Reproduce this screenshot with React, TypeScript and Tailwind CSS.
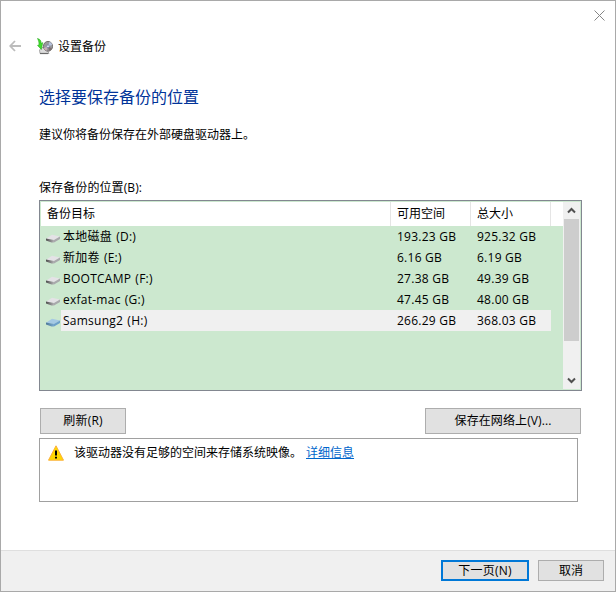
import React from "react";

type Drive = {
  name: string;
  free: string;
  total: string;
  active?: boolean;
};

const drives: Drive[] = [
  { name: "本地磁盘 (D:)", free: "193.23 GB", total: "925.32 GB" },
  { name: "新加卷 (E:)", free: "6.16 GB", total: "6.19 GB" },
  { name: "BOOTCAMP (F:)", free: "27.38 GB", total: "49.39 GB" },
  { name: "exfat-mac (G:)", free: "47.45 GB", total: "48.00 GB" },
  { name: "Samsung2 (H:)", free: "266.29 GB", total: "368.03 GB", active: true },
];

const BackupIcon = () => (
  <svg width="16" height="17" viewBox="0 0 16 17" className="shrink-0">
    <path d="M2.5 12 L5 9.5 H9 L12 15.5 H3 Z" fill="#dcdcdc" stroke="#8c8c8c" strokeWidth="0.7" />
    <path d="M3 15.5 H11" stroke="#6a6a6a" strokeWidth="1.2" />
    <ellipse cx="11" cy="8.3" rx="4.6" ry="4.9" fill="#98989c" stroke="#6c6866" strokeWidth="0.9" />
    <path d="M11 8.3 L12.5 3.8 A4.6 4.9 0 0 1 15.3 7 Z" fill="#b7c3dd" />
    <path d="M11 8.3 L6.8 10 A4.6 4.9 0 0 0 9.5 12.8 Z" fill="#c8acb8" />
    <path d="M11 8.3 L15 10.5 A4.6 4.9 0 0 1 12 13 Z" fill="#7d6f70" />
    <circle cx="11" cy="8.3" r="1.4" fill="#e4e4ee" stroke="#5f6f9c" strokeWidth="0.6" />
    <path d="M0.3 0.5 C2.8 0.8 4.2 2.5 4.2 5.3 L5.8 4.6 L4.4 11.5 L0.5 7.4 L2 6.8 C2 4 1.5 2 0.3 0.5 Z" fill="#41d92b" stroke="#22a51c" strokeWidth="0.5" />
  </svg>
);

const DriveIcon = ({ active }: { active?: boolean }) => {
  const id = active ? "face-active" : "face";
  return (
    <svg width="14" height="9" viewBox="0 0 14 9" className="mt-[3px] shrink-0">
      <defs>
        <linearGradient id={id}>
          <stop offset="0" stopColor={active ? "#4d7898" : "#4c4c4c"} />
          <stop offset="1" stopColor={active ? "#7aa9cf" : "#b4b4b6"} />
        </linearGradient>
      </defs>
      <path d="M0 4.8 L6 0.8 L14 2.4 L8 6.2 Z" fill={active ? "#a5c9e4" : "#e4e2e6"} />
      <path d="M0 4.6 L8 6 V8.6 L5.5 8.4 L0 6.4 Z" fill={`url(#${id})`} />
      <path d="M8 6 L14 2.4 V5 L8 8.6 Z" fill={active ? "#6c9fca" : "#a9a9ac"} />
    </svg>
  );
};

const WarningIcon = () => (
  <svg width="16" height="16" viewBox="0 0 16 16" className="shrink-0">
    <path d="M8 0.8 L15.5 15.2 H0.5 Z" fill="#ffd800" stroke="#fbb03b" strokeWidth="1" strokeLinejoin="round" />
    <path d="M7 5.5 H9 V10.5 H7 Z M7 11.8 H9 V13.6 H7 Z" fill="#000" />
  </svg>
);

const App = () => {
  return (
    <div className="flex h-[592px] w-[616px] flex-col border border-[#a9a9a9] bg-white font-['Open_Sans','Noto_Sans_CJK_SC',sans-serif] text-[12px] leading-[16px] text-black">
      {/* TITLE */}
      <div className="flex h-[33px] justify-end pt-[9px] pr-[10px]">
        <svg width="11" height="11" viewBox="0 0 11 11">
          <path d="M0.5 0.5 L10.5 10.5 M10.5 0.5 L0.5 10.5" stroke="#858585" strokeWidth="1" />
        </svg>
      </div>
      <div className="flex h-[24px] items-center pl-[8px]">
        <svg width="12" height="12" viewBox="0 0 12 12">
          <path d="M6 1 L1.2 6 L6 11 M1.2 6 H12" fill="none" stroke="#bcbcbc" strokeWidth="1.8" />
        </svg>
        <div className="ml-[16px] flex items-center gap-[5px]">
          <BackupIcon />
          <span className="pt-px">设置备份</span>
        </div>
      </div>

      {/* CONTENT */}
      <div className="flex grow flex-col pl-[38px]">
        <h1 className="mt-[27px] text-[16px] leading-[24px] text-[#003399]">选择要保存备份的位置</h1>
        <p className="mt-[18px]">建议你将备份保存在外部硬盘驱动器上。</p>
        <label className="mt-[37px] tracking-[0.1px]">保存备份的位置(B):</label>

        {/* DRIVE LIST */}
        <div className="mt-[4px] flex h-[191px] w-[543px] border border-[#828790] bg-[#cce8cf] p-px">
          <div className="grow">
            <div className="flex h-[24px] items-center bg-white">
              <span className="h-full w-[350px] border-r border-[#e5e5e5] pl-[6px] leading-[24px]">备份目标</span>
              <span className="h-full w-[80px] border-r border-[#e5e5e5] pl-[6px] leading-[24px]">可用空间</span>
              <span className="h-full w-[80px] border-r border-[#e5e5e5] pl-[6px] leading-[24px]">总大小</span>
            </div>
            {drives.map((drive) => (
              <div key={drive.name} className="flex h-[21px] items-center pl-[5px] leading-[21px] tracking-[0.25px]">
                <DriveIcon active={drive.active} />
                <div className={`ml-px flex h-full w-[490px] pl-[2px] ${drive.active ? "bg-[#f0f0f0]" : ""}`}>
                  <span className="w-[334px] [word-spacing:0.8px]">{drive.name}</span>
                  <span className="w-[80px]">{drive.free}</span>
                  <span>{drive.total}</span>
                </div>
              </div>
            ))}
          </div>
          <div className="flex w-[17px] flex-col items-center bg-[#f0f0f0]">
            <div className="flex h-[17px] items-center">
              <svg width="9" height="7" viewBox="0 0 9 7">
                <path d="M1 5.5 L4.5 2 L8 5.5" fill="none" stroke="#505050" strokeWidth="2" />
              </svg>
            </div>
            <div className="h-[122px] w-[15px] bg-[#cdcdcd]" />
            <div className="mt-auto flex h-[17px] items-center">
              <svg width="9" height="7" viewBox="0 0 9 7">
                <path d="M1 1.5 L4.5 5 L8 1.5" fill="none" stroke="#505050" strokeWidth="2" />
              </svg>
            </div>
          </div>
        </div>

        {/* ACTIONS */}
        <div className="mt-[17px] ml-px flex w-[541px] justify-between">
          <button className="h-[26px] w-[86px] border border-[#adadad] bg-[#e1e1e1] tracking-[0.2px]">刷新(R)</button>
          <button className="h-[26px] w-[156px] border border-[#adadad] bg-[#e1e1e1] tracking-[0.1px]">保存在网络上(V)...</button>
        </div>

        {/* WARNING */}
        <div className="mt-[4px] flex h-[64px] w-[539px] items-start border border-[#a0a0a0] pt-[6px] pl-[8px]">
          <WarningIcon />
          <span className="ml-[10px]">该驱动器没有足够的空间来存储系统映像。</span>
          <a className="ml-[4px] text-[#0066cc] underline">详细信息</a>
        </div>
      </div>

      {/* FOOTER */}
      <div className="flex h-[41px] shrink-0 items-center justify-end gap-[9px] border-t border-[#dfdfdf] bg-[#f0f0f0] pr-[11px] pb-px">
        <button className="h-[21px] w-[88px] border-2 border-[#0078d7] bg-[#e1e1e1] leading-[17px] tracking-[0.2px]">下一页(N)</button>
        <button className="h-[21px] w-[66px] border border-[#adadad] bg-[#e1e1e1]">取消</button>
      </div>
    </div>
  );
};

export default App;
